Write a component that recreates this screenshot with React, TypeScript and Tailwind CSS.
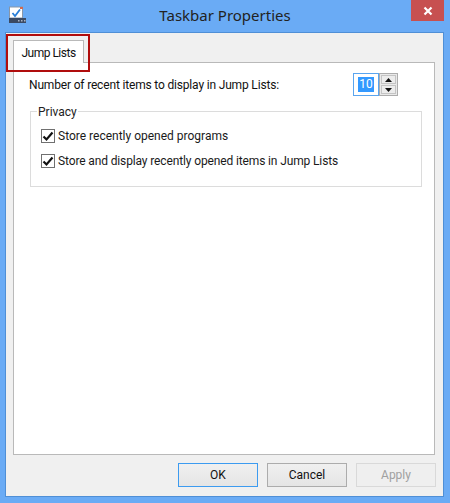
import React from 'react';

const BODY_FONT = { fontFamily: 'Roboto, "Noto Sans", sans-serif' };
const TITLE_FONT = { fontFamily: '"Noto Sans", "Open Sans", sans-serif' };

const Check: React.FC<{ label: string; tracking?: string }> = ({ label, tracking }) => (
  <div className="flex items-center gap-[3px] h-[15px] text-[12px] text-[#1a1a1a]">
    <div className="w-[14px] h-[14px] border border-[#707070] bg-white flex items-center justify-center">
      <svg width="12" height="12" viewBox="0 0 12 12">
        <path d="M1.5 6.5 L4.5 9.5 L10.5 2.5" fill="none" stroke="#111" strokeWidth="2.2" />
      </svg>
    </div>
    <span className={tracking}>{label}</span>
  </div>
);

const DialogButton: React.FC<{ label: string; kind?: 'default' | 'disabled' }> = ({ label, kind }) => {
  if (kind === 'disabled') {
    return (
      <div className="w-[80px] h-[24px] border border-[#d9d9d9] bg-[#efefef] text-[#a0a0a0] text-[12px] flex items-center justify-center">
        {label}
      </div>
    );
  }
  return (
    <div
      className={
        kind === 'default'
          ? 'w-[80px] h-[24px] border border-[#3c9bf0] bg-gradient-to-b from-[#f0f0f0] to-[#e5e5e5] text-[#111] text-[12px] flex items-center justify-center'
          : 'w-[80px] h-[24px] border border-[#acacac] bg-gradient-to-b from-[#f0f0f0] to-[#e5e5e5] text-[#111] text-[12px] flex items-center justify-center'
      }
    >
      {label}
    </div>
  );
};

export default function App() {
  return (
    <div className="relative w-[450px] h-[503px] bg-[#6aabf5] flex flex-col overflow-hidden" style={BODY_FONT}>
      {/* title bar */}
      <div className="relative h-[32px] flex items-center justify-center shrink-0">
        <svg className="absolute left-[8px] top-[6px]" width="19" height="18" viewBox="0 0 19 18">
          <rect x="1.5" y="1" width="13" height="11" fill="#fff" stroke="#8a97a8" />
          <rect x="12" y="1" width="3" height="2" fill="#d06a50" />
          <path d="M4.5 7 L7 10 L12 3.5" fill="none" stroke="#2a7fd8" strokeWidth="1.8" />
          <rect x="1" y="12" width="17" height="5" fill="#3b4a63" />
          <rect x="10" y="14" width="1.5" height="1.5" fill="#aab4c4" />
          <rect x="13" y="14" width="1.5" height="1.5" fill="#aab4c4" />
          <rect x="16" y="14" width="1.5" height="1.5" fill="#aab4c4" />
        </svg>
        <span className="text-[15px] text-[#222] -mt-[1px]" style={TITLE_FONT}>Taskbar Properties</span>
        <div className="absolute right-[6px] top-0 w-[33px] h-[21px] bg-[#c75050] flex items-center justify-center">
          <svg width="10" height="10" viewBox="0 0 10 10">
            <path d="M1.5 1.5 L8.5 8.5 M8.5 1.5 L1.5 8.5" stroke="#fff" strokeWidth="2.2" />
          </svg>
        </div>
      </div>

      {/* client area */}
      <div className="ml-[5px] mr-[6px] mb-[6px] flex-1 border border-[#4f8fd6] bg-[#f0f0f0] flex flex-col min-h-0">
        <div className="flex-1 flex flex-col pl-[7px] pr-[8px] pt-[7px] min-h-0">
          {/* tab strip */}
          <div className="flex h-[22px] shrink-0 relative z-10">
            <div className="w-[71px] h-[23px] border border-b-0 border-[#b9b9b9] bg-white text-[12px] tracking-[-0.5px] text-[#111] flex items-center justify-center pt-[1px]">
              Jump Lists
            </div>
          </div>

          {/* tab panel */}
          <div className="h-[393px] border border-[#b9b9b9] bg-white pl-[15px] pr-[12px] pt-[10px]">
            <div className="flex items-center h-[23px] text-[12px] text-[#111]">
              <span className="w-[324px] tracking-[-0.17px]">Number of recent items to display in Jump Lists:</span>
              <div className="w-[26px] h-[23px] border border-[#5aa5ef] flex items-center justify-center">
                <span className="bg-[#3399ff] text-white px-[1px] leading-[15px]">10</span>
              </div>
              <div className="w-[19px] h-[23px] border border-[#acacac] bg-[#e9e9e9] flex flex-col gap-[1px] p-[1px]">
                <div className="flex-1 bg-[#ececec] border border-[#c4c4c4] flex items-center justify-center">
                  <svg width="7" height="4" viewBox="0 0 7 4">
                    <path d="M3.5 0 L7 4 L0 4 Z" fill="#111" />
                  </svg>
                </div>
                <div className="flex-1 bg-[#ececec] border border-[#c4c4c4] flex items-center justify-center">
                  <svg width="7" height="4" viewBox="0 0 7 4">
                    <path d="M0 0 L7 0 L3.5 4 Z" fill="#111" />
                  </svg>
                </div>
              </div>
            </div>

            {/* group box */}
            <div className="relative mt-[15px] ml-[1px] h-[76px] border border-[#dcdcdc] pl-[10px] pt-[16px] flex flex-col gap-[10px]">
              <span className="absolute left-[6px] -top-[9px] bg-white px-[1px] text-[12px] text-[#222]">Privacy</span>
              <Check label="Store recently opened programs" />
              <Check label="Store and display recently opened items in Jump Lists" tracking="tracking-[-0.13px]" />
            </div>
          </div>

          {/* buttons */}
          <div className="flex justify-end gap-[9px] pt-[8px] -mr-[1px]">
            <DialogButton label="OK" kind="default" />
            <DialogButton label="Cancel" />
            <DialogButton label="Apply" kind="disabled" />
          </div>
        </div>
      </div>

      {/* red highlight around the tab */}
      <div className="absolute left-[6px] top-[34px] w-[84px] h-[38px] border-[2px] border-[#b00d0d] pointer-events-none" />
    </div>
  );
}
